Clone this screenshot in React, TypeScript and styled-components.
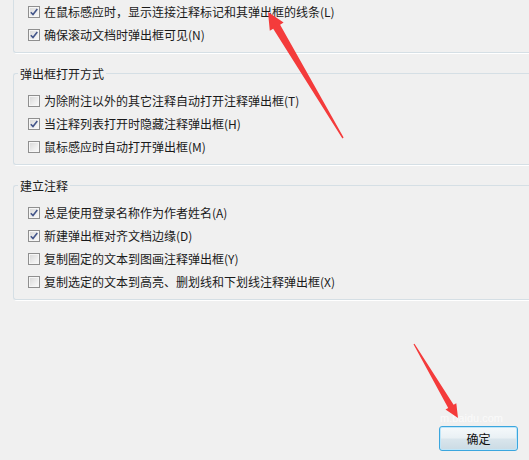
import React from 'react'
import styled, { createGlobalStyle } from 'styled-components'

type OptionType = {
  text: string
  checked: boolean
}

type GroupType = {
  title?: string
  options: OptionType[]
}

const groups: GroupType[] = [
  {
    options: [
      { text: '在鼠标感应时，显示连接注释标记和其弹出框的线条(L)', checked: true },
      { text: '确保滚动文档时弹出框可见(N)', checked: true },
    ],
  },
  {
    title: '弹出框打开方式',
    options: [
      { text: '为除附注以外的其它注释自动打开注释弹出框(T)', checked: false },
      { text: '当注释列表打开时隐藏注释弹出框(H)', checked: true },
      { text: '鼠标感应时自动打开弹出框(M)', checked: false },
    ],
  },
  {
    title: '建立注释',
    options: [
      { text: '总是使用登录名称作为作者姓名(A)', checked: true },
      { text: '新建弹出框对齐文档边缘(D)', checked: true },
      { text: '复制圈定的文本到图画注释弹出框(Y)', checked: false },
      { text: '复制选定的文本到高亮、删划线和下划线注释弹出框(X)', checked: false },
    ],
  },
]

const Check = ({ checked }: { checked: boolean }) => (
  <CheckBox>
    {checked && (
      <svg width="10" height="10" viewBox="0 0 10 10">
        <path d="M1.8 5.2 L4 7.6 L8.3 2" fill="none" stroke="#44568a" strokeWidth="1.6" />
      </svg>
    )}
  </CheckBox>
)

const App = () => {
  return (
    <Page>
      <GlobalStyle />
      {groups.map((group, i) => (
        <Group key={i} $first={i === 0}>
          {group.title && <Legend>{group.title}</Legend>}
          {group.options.map(option => (
            <Row key={option.text}>
              <Check checked={option.checked} />
              <span>{option.text}</span>
            </Row>
          ))}
        </Group>
      ))}

      <Footer>
        <OkButton type={'button'}>确定</OkButton>
      </Footer>

      <Watermark>m.baidu.com</Watermark>

      <Arrows width="529" height="460" viewBox="0 0 529 460">
        <polygon
          points="268,12 283.6,22.6 280.1,24.7 343.6,137.6 342.4,138.4 273.2,28.7 269.8,30.8"
          fill="#f43b3b"
        />
        <polygon
          points="458,418 456.3,403.2 453.6,404.8 414.5,343.7 413.5,344.3 448.2,408 445.5,409.6"
          fill="#f43b3b"
        />
      </Arrows>
    </Page>
  )
}

export default App

const GlobalStyle = createGlobalStyle`
  html, body {
    margin: 0;
    padding: 0;
    background: #f0f0f0;
  }
`

const Page = styled.div`
  position: relative;
  width: 529px;
  height: 460px;
  overflow: hidden;
  box-sizing: border-box;
  padding-left: 13px;
  background: #f0f0f0;
  font-family: 'Noto Sans CJK SC', 'Noto Sans', sans-serif;
  font-size: 12px;
  color: #1a1a1a;
`

const Group = styled.fieldset<{ $first: boolean }>`
  margin: ${p => (p.$first ? '-16px' : '12px')} 0 0 0;
  min-width: 0;
  padding: ${p => (p.$first ? '15px' : '7px')} 0 6px 4px;
  border: 1px solid #d5dfe5;
  border-right: none;
  border-radius: 3px 0 0 3px;
  box-shadow: 1px 1px 0 #ffffff;
`

const Legend = styled.legend`
  padding: 0 2px;
  margin: 0;
  font-size: 12px;
  line-height: 17px;
  color: #1a1a1a;
`

const Row = styled.div`
  display: flex;
  align-items: center;
  gap: 4px;
  height: 23px;
  padding-left: 10px;
  white-space: nowrap;
`

const CheckBox = styled.span`
  display: flex;
  align-items: center;
  justify-content: center;
  width: 12px;
  height: 12px;
  box-sizing: border-box;
  border: 1px solid #8f8f8f;
  background: linear-gradient(135deg, #d6d6d6 0%, #eeeeee 60%, #fbfbfb 100%);
  box-shadow: inset 0 0 0 1px #f6f6f6;
  flex-shrink: 0;
`

const Footer = styled.div`
  display: flex;
  justify-content: flex-end;
  padding-right: 11px;
  margin-top: 126px;
`

const OkButton = styled.button`
  width: 79px;
  height: 25px;
  padding: 0;
  border: 1px solid #3ba6de;
  border-radius: 3px;
  box-shadow: inset 0 0 0 1px #bfe6f9;
  background: linear-gradient(#f5f9fb 0%, #e9f0f4 48%, #d9e5ec 52%, #cbdbe4 100%);
  font-family: 'Noto Sans CJK SC', 'Noto Sans', sans-serif;
  font-size: 12px;
  color: #111111;
`

const Watermark = styled.div`
  position: absolute;
  left: 440px;
  top: 412px;
  font-family: 'Liberation Sans', sans-serif;
  font-size: 11px;
  line-height: 13px;
  color: rgba(255, 255, 255, 0.7);
  pointer-events: none;
`

const Arrows = styled.svg`
  position: absolute;
  left: 0;
  top: 0;
  pointer-events: none;
`
